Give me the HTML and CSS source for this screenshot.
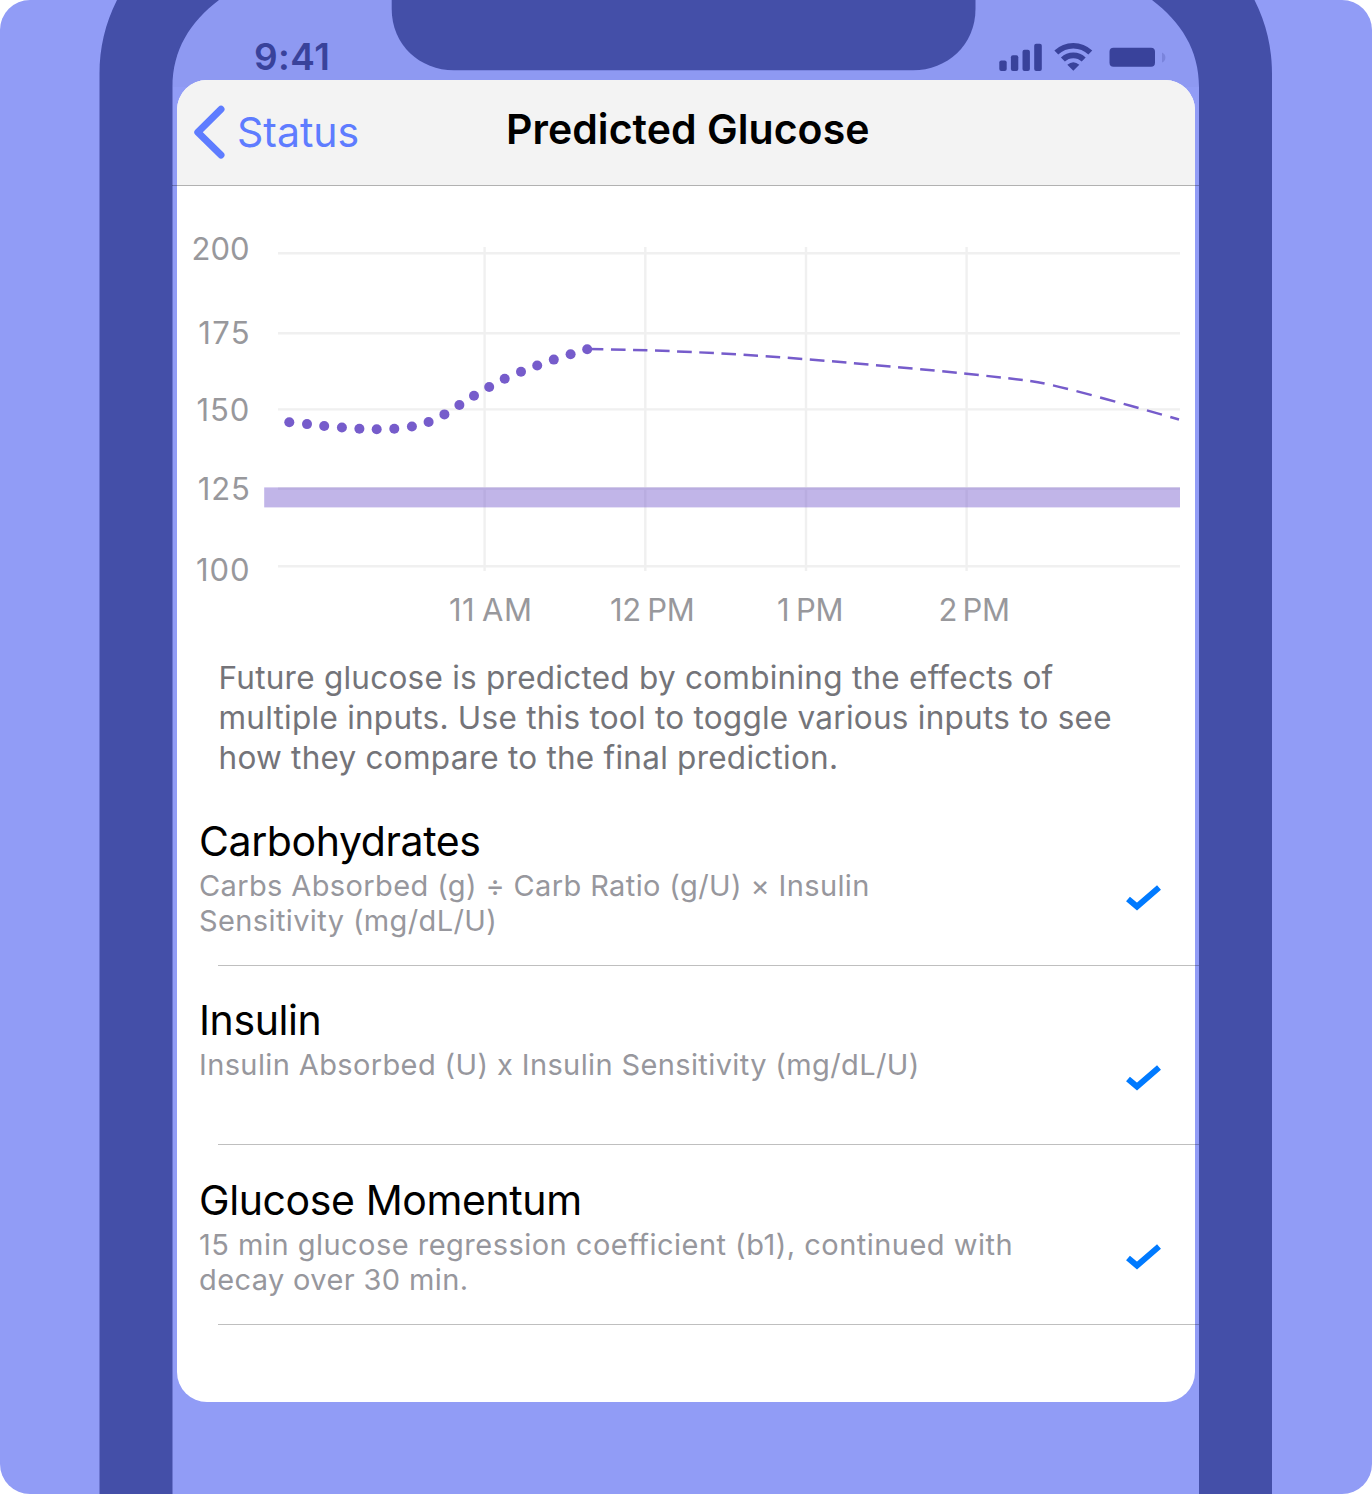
FILE: index.html
```html
<!DOCTYPE html>
<html lang="en">
<head>
<meta charset="utf-8">
<title>Predicted Glucose</title>
<link rel="stylesheet" href="styles.css">
</head>
<body>
<div class="stage">
  <svg class="phone" viewBox="0 0 1372 1494" aria-hidden="true">
    <path class="status-tint" d="M219 0C190 22 172.500 50 172.500 87H1199C1199 50 1181 22 1152 0Z"/>
    <path class="frame" d="M117 0C105 24 99.500 48 99.500 74V1494H172.500V87C172.500 50 190 22 219 0Z"/>
    <path class="frame" d="M1254.500 0C1266.500 24 1272 48 1272 74V1494H1199V87C1199 50 1181 22 1152 0Z"/>
    <path class="frame" d="M391.700 0V9C391.700 45 420 70.300 454 70.300H913C947 70.300 975.500 45 975.500 9V0Z"/>
  </svg>
  <div class="screen">
    <div class="statusbar">
      <span class="time">9:41</span>
      <svg class="indicators" width="170" height="36" viewBox="998 38 170 36" aria-hidden="true">
        <rect x="999.300" y="60.500" width="7.400" height="10.500" rx="2"/>
        <rect x="1010.900" y="55.300" width="7.400" height="15.700" rx="2"/>
        <rect x="1022.500" y="49.700" width="7.400" height="21.300" rx="2"/>
        <rect x="1034.200" y="43.800" width="7.600" height="27.200" rx="2"/>
        <path class="wave" d="M1056.300 52.600A24.500 24.500 0 0 1 1090.300 52.600M1062.900 59.600A14.800 14.800 0 0 1 1083.700 59.600"/>
        <path d="M1073.300 70.700L1067.300 64.700Q1073.300 59.700 1079.300 64.700Z"/>
        <rect x="1109.500" y="47.800" width="45.500" height="19" rx="4"/>
        <path class="nub" d="M1162 52.500Q1165.400 54 1165.400 57.500T1162 62.500Z"/>
      </svg>
    </div>
    <main class="card">
      <header class="navbar">
        <a class="back">
          <svg width="32" height="54" viewBox="193 105 32 54" aria-hidden="true"><path d="M221 109.300L197.800 132.200L221 155"/></svg>
          <span>Status</span>
        </a>
        <h1>Predicted Glucose</h1>
      </header>
      <svg class="chart" width="1018" height="471" viewBox="177 186 1018 471">
        <g class="grid">
          <path d="M278 253.200H1180M278 333.200H1180M278 409.400H1180M278 488.500H1180M278 566.200H1180"/>
          <path d="M484.600 247V571M645.300 247V571M806 247V571M966.600 247V571"/>
        </g>
        <rect class="target" x="264.200" y="487.400" width="915.800" height="20"/>
        <g class="history">
          <circle cx="289.300" cy="422.300" r="5"/><circle cx="307" cy="424.100" r="5"/><circle cx="324.200" cy="426" r="5"/><circle cx="341.900" cy="427.500" r="5"/><circle cx="359.400" cy="428.700" r="5"/><circle cx="376.700" cy="429.200" r="5"/><circle cx="394.300" cy="428.700" r="5"/><circle cx="411.900" cy="426.500" r="5"/><circle cx="428.600" cy="422" r="5"/><circle cx="444.400" cy="414.400" r="5"/><circle cx="459.400" cy="405" r="5"/><circle cx="474" cy="395.700" r="5"/><circle cx="489.200" cy="387" r="5"/><circle cx="504.700" cy="378.800" r="5"/><circle cx="521" cy="371.800" r="5"/><circle cx="537.200" cy="365.500" r="5"/><circle cx="553.800" cy="359.600" r="5"/><circle cx="570.600" cy="354.200" r="5"/><circle cx="587.200" cy="349.200" r="5"/>
        </g>
        <path class="forecast" d="M588.500 349.100C670 350 745 354.300 806 359.200S925 369.500 966.500 373.800S1030 380.500 1046 383.800"/>
        <path class="forecast late" d="M1053 385.400C1075 390.300 1105 398.800 1131.400 406L1179 419.500"/>
        <g class="label">
          <text x="191.500" y="259.600" letter-spacing="0">200</text>
          <text x="198.300" y="343.800" letter-spacing="1.300">175</text>
          <text x="196.600" y="420.600" letter-spacing="0.900">150</text>
          <text x="197.800" y="500" letter-spacing="0.800">125</text>
          <text x="196" y="581.200" letter-spacing="0.900">100</text>
          <text x="449" y="621" letter-spacing="0.500" word-spacing="-2.400">11 AM</text>
          <text x="610" y="621" letter-spacing="-0.300" word-spacing="-2">12 PM</text>
          <text x="777" y="621" letter-spacing="-0.200" word-spacing="-2">1 PM</text>
          <text x="938.600" y="621" letter-spacing="-0.400" word-spacing="-2.800">2 PM</text>
        </g>
      </svg>
      <p class="intro">Future glucose is predicted by combining the effects of<br>multiple inputs. Use this tool to toggle various inputs to see<br>how they compare to the final prediction.</p>
      <ul class="inputs">
        <li>
          <div class="text"><h2>Carbohydrates</h2><p>Carbs Absorbed (g) ÷ Carb Ratio (g/U) × Insulin<br>Sensitivity (mg/dL/U)</p></div>
          <svg class="check" width="38" height="28" viewBox="0 0 38 28"><path d="M3 15L12 22.600L34 3.600"/></svg>
        </li>
        <li>
          <div class="text"><h2>Insulin</h2><p>Insulin Absorbed (U) x Insulin Sensitivity (mg/dL/U)</p></div>
          <svg class="check" width="38" height="28" viewBox="0 0 38 28"><path d="M3 15L12 22.600L34 3.600"/></svg>
        </li>
        <li>
          <div class="text"><h2>Glucose Momentum</h2><p><span class="wide">15 min glucose regression coefficient (b1), continued with</span><br>decay over 30 min.</p></div>
          <svg class="check" width="38" height="28" viewBox="0 0 38 28"><path d="M3 15L12 22.600L34 3.600"/></svg>
        </li>
      </ul>
    </main>
  </div>
</div>
</body>
</html>
```
FILE: styles.css
```css
* { box-sizing: border-box; }
body { margin: 0; background: #fff; font-family: Inter, "Liberation Sans", sans-serif; }
h1, h2, p, ul { margin: 0; padding: 0; font-weight: 400; }

.stage {
  position: relative;
  width: 1372px;
  height: 1494px;
  border-radius: 30px;
  background: #919cf6;
  overflow: hidden;
}
.phone { position: absolute; inset: 0; width: 1372px; height: 1494px; }
.frame { fill: #444fa8; }
.status-tint { fill: #8e99f2; }

.screen { position: relative; width: 1018px; margin-left: 177px; }

.statusbar {
  display: flex;
  justify-content: space-between;
  height: 80px;
  padding: 38px 27px 0 77px;
  color: #39429b;
}
.time { font-size: 37px; font-weight: 600; line-height: 38px; letter-spacing: .4px; }
.indicators { fill: #39429b; }
.wave { fill: none; stroke: #39429b; stroke-width: 5.6; }
.nub { fill: #7a84dc; }

.card { height: 1322px; border-radius: 30px; background: #fff; }

.navbar {
  position: relative;
  display: flex;
  height: 106px;
  border-radius: 30px 30px 0 0;
  background: #f3f3f3;
}
/* hairline runs past the card to the edge of the phone frame */
.navbar::after {
  content: "";
  position: absolute;
  left: -5px;
  right: -4px;
  bottom: 0;
  height: 1px;
  background: rgba(0, 0, 0, .27);
}
.back { display: flex; gap: 12px; width: 314px; padding: 25px 0 0 16px; color: #5e7cff; font-size: 41px; line-height: 54px; }
.back path { fill: none; stroke: #5e7cff; stroke-width: 7; stroke-linecap: round; stroke-linejoin: round; }
h1 { margin-left: 15px; padding-top: 23px; font-size: 41px; font-weight: 600; line-height: 52px; letter-spacing: .05px; color: #000; }

.chart { display: block; }
.grid { fill: none; stroke: #f0f0f0; stroke-width: 2.4; }
.target { fill: #765ccb; opacity: .45; }
.history { fill: #765ccb; }
.forecast { fill: none; stroke: #765ccb; stroke-width: 2.5; stroke-dasharray: 14.6 7.55; }
.late { stroke-dasharray: 15.6 8.7; }
.label { fill: #98989c; font-size: 31px; }

.intro {
  padding: 1px 0 0 41.5px;
  font-size: 31.5px;
  line-height: 40px;
  letter-spacing: .25px;
  color: #747479;
}

.inputs { list-style: none; padding-top: 8px; }
.inputs li {
  position: relative;
  display: flex;
  justify-content: space-between;
  height: 179.5px;
  padding: 28.5px 32px 0 22px;
}
.inputs li::after {
  content: "";
  position: absolute;
  left: 41px;
  right: -4px;
  bottom: 0;
  height: 1px;
  background: rgba(0, 0, 0, .25);
}
h2 { font-size: 41px; line-height: 52px; letter-spacing: -.4px; color: #000; }
.text p { padding-top: 1px; font-size: 29px; line-height: 35px; letter-spacing: .38px; color: #97979d; }
.text .wide { letter-spacing: .48px; }
.check { margin-top: 69.5px; }
.check path { fill: none; stroke: #007aff; stroke-width: 6; }
```
